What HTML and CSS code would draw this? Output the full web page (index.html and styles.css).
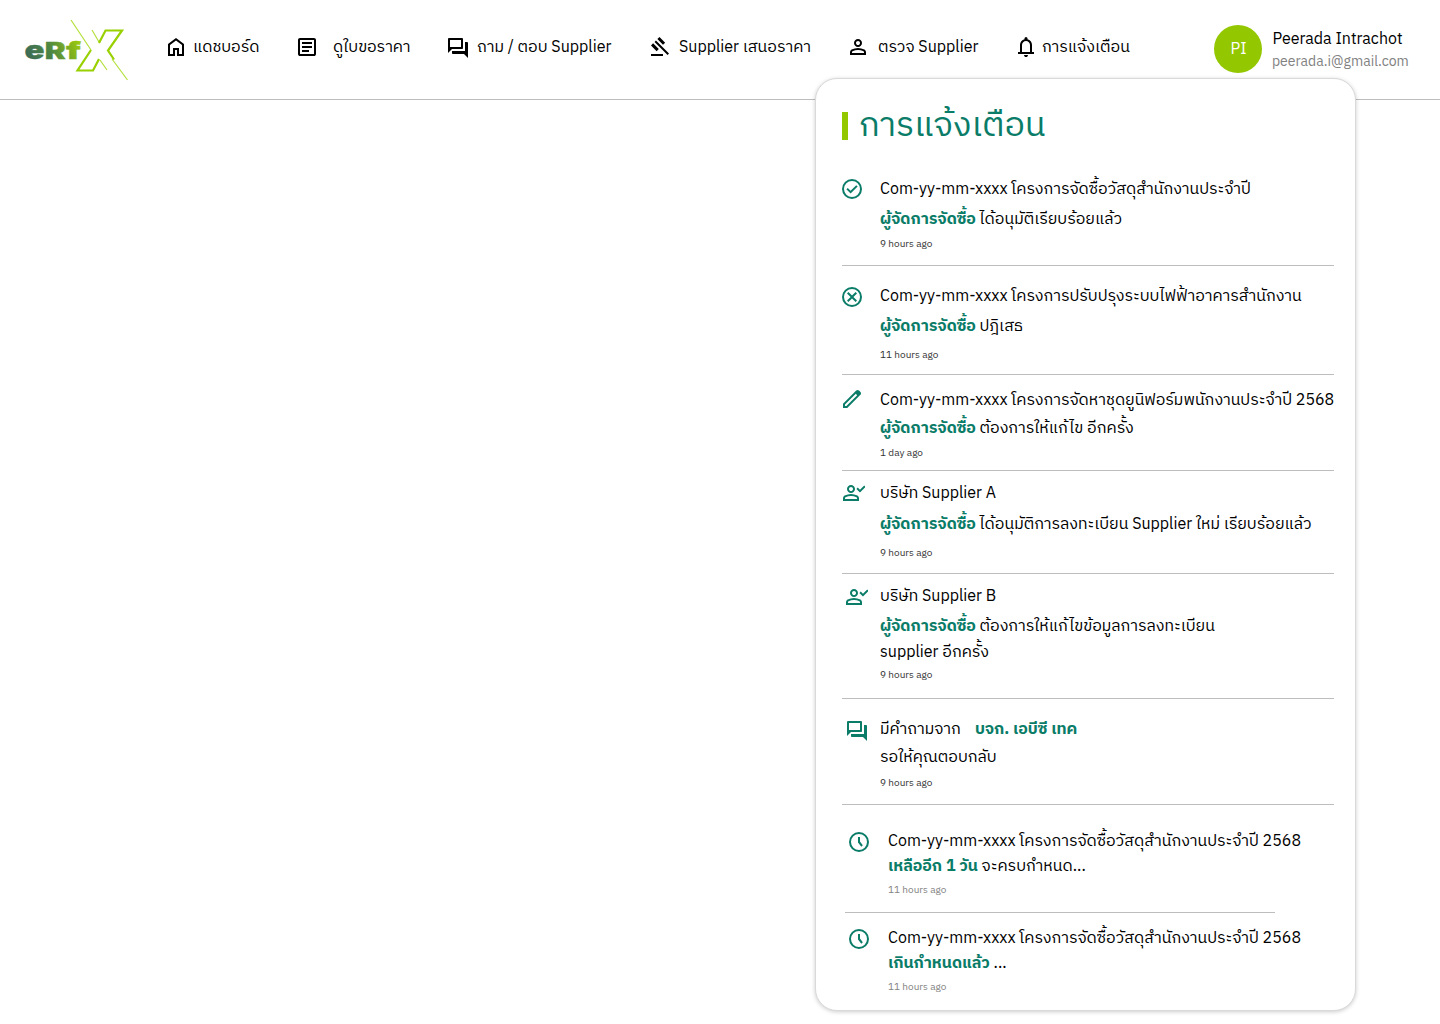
FILE: index.html
```html
<!DOCTYPE html>
<html lang="th">
<head>
<meta charset="utf-8">
<title>eRfX</title>
<link rel="stylesheet" href="styles.css">
</head>
<body>
<svg class="sprite" aria-hidden="true">
  <symbol id="home" viewBox="0 0 24 24"><path d="M6 19h3v-6h6v6h3v-9l-6-4.5L6 10v9Zm-2 2V9l8-6 8 6v12h-7v-6h-2v6H4Z"/></symbol>
  <symbol id="article" viewBox="0 0 24 24"><path d="M7 17h7v-2H7v2Zm0-4h10v-2H7v2Zm0-4h10V7H7v2ZM5 21q-.825 0-1.413-.588T3 19V5q0-.825.588-1.413T5 3h14q.825 0 1.413.588T21 5v14q0 .825-.588 1.413T19 21H5Zm0-2h14V5H5v14Z"/></symbol>
  <symbol id="forum" viewBox="0 0 24 24"><path d="M7 18q-.425 0-.713-.288T6 17v-2h13V6h2q.425 0 .713.288T22 7v15l-4-4H7Zm-5-1V3q0-.425.288-.713T3 2h13q.425 0 .713.288T17 3v9q0 .425-.288.713T16 13H6l-4 4Zm13-6V4H4v7h11Z"/></symbol>
  <symbol id="gavel" viewBox="0 0 24 24"><path d="M3 21v-2h12v2H3Zm5.65-4.85L3 10.5l2.1-2.15L10.8 14l-2.15 2.15ZM15 9.8 9.35 4.1l2.15-2.1 5.65 5.65L15 9.8ZM19.6 20 6.55 6.95l1.4-1.4L21 18.6 19.6 20Z"/></symbol>
  <symbol id="person" viewBox="0 0 24 24"><path d="M12 12q-1.65 0-2.825-1.175T8 8q0-1.65 1.175-2.825T12 4q1.65 0 2.825 1.175T16 8q0 1.65-1.175 2.825T12 12Zm-8 8v-2.8q0-.85.438-1.563T5.6 14.55q1.55-.775 3.15-1.163T12 13q1.65 0 3.25.388t3.15 1.162q.725.375 1.163 1.088T20 17.2V20H4Zm2-2h12v-.8q0-.275-.138-.5t-.362-.35q-1.35-.675-2.725-1.013T12 15q-1.4 0-2.775.337T6.5 16.35q-.225.125-.363.35T6 17.2v.8Zm6-8q.825 0 1.413-.588T14 8q0-.825-.588-1.413T12 6q-.825 0-1.413.588T10 8q0 .825.588 1.413T12 10Z"/></symbol>
  <symbol id="bell" viewBox="0 0 24 24"><path d="M4 19v-2h2v-7q0-2.075 1.25-3.688T10.500 4.200V3.500q0-.625.438-1.063T12 2q.625 0 1.063.438T13.500 3.500v.7q2 .5 3.250 2.113T18 10v7h2v2H4Zm8 3q-.825 0-1.413-.588T10 20h4q0 .825-.588 1.413T12 22Zm-4-5h8v-7q0-1.650-1.175-2.825T12 6q-1.650 0-2.825 1.175T8 10v7Z"/></symbol>
  <symbol id="check" viewBox="0 0 24 24"><circle cx="12" cy="12" r="9" fill="none" stroke="currentColor" stroke-width="2"/><path d="m10.600 16.600 7.050-7.050-1.400-1.400-5.650 5.650-2.850-2.850-1.400 1.400 4.250 4.250Z"/></symbol>
  <symbol id="cancel" viewBox="0 0 24 24"><circle cx="12" cy="12" r="9" fill="none" stroke="currentColor" stroke-width="2"/><path d="m8.400 17 3.600-3.600 3.600 3.600 1.400-1.400-3.600-3.600L17 8.400 15.600 7 12 10.600 8.400 7 7 8.400l3.600 3.600L7 15.600 8.400 17Z"/></symbol>
  <symbol id="edit" viewBox="0 0 24 24"><path d="M5 19h1.400L17.200 8.200l-1.400-1.400L5 17.600V19ZM3 21v-4.250L16.200 3.575q.3-.275.663-.425t.762-.15q.4 0 .775.150t.65.450l1.375 1.400q.3.275.438.650t.137.750q0 .4-.137.763t-.438.662L7.250 21H3Z"/></symbol>
  <symbol id="reg" viewBox="0 0 24 24"><path d="m17.550 12-3.550-3.550 1.400-1.400 2.150 2.100 4.250-4.250 1.400 1.450L17.550 12Z" transform="translate(1.400 -.5)"/><path d="M12 12q-1.650 0-2.825-1.175T8 8q0-1.650 1.175-2.825T12 4q1.650 0 2.825 1.175T16 8q0 1.650-1.175 2.825T12 12Zm-8 8v-2.800q0-.85.438-1.563T5.600 14.550q1.550-.775 3.150-1.163T12 13q1.650 0 3.250.388t3.150 1.162q.725.375 1.163 1.088T20 17.200V20H4Zm2-2h12v-.8q0-.275-.138-.5t-.362-.35q-1.350-.675-2.725-1.013T12 15q-1.400 0-2.775.337T6.500 16.350q-.225.125-.363.350T6 17.200v.8Zm6-8q.825 0 1.413-.588T14 8q0-.825-.588-1.413T12 6q-.825 0-1.413.588T10 8q0 .825.588 1.413T12 10Z" transform="translate(-2)"/></symbol>
  <symbol id="clock" viewBox="0 0 24 24"><circle cx="12" cy="12" r="9" fill="none" stroke="currentColor" stroke-width="2"/><path d="M11 7v5.400l3.300 4.300 1.500-1.400-2.800-3.700V7Z"/></symbol>
</svg>

<header class="topbar">
  <svg class="logo" viewBox="0 0 104 62" role="img" aria-label="eRfX">
    <defs>
      <linearGradient id="word" gradientUnits="userSpaceOnUse" x1="4" y1="42" x2="54" y2="20">
        <stop offset="0" stop-color="#3c6a57"/><stop offset=".45" stop-color="#4c8544"/><stop offset="1" stop-color="#9cca0c"/>
      </linearGradient>
    </defs>
    <g class="logo-word" fill="url(#word)" stroke="url(#word)">
      <text x=".5" y="39.200" font-size="25.500" textLength="20" lengthAdjust="spacingAndGlyphs">e</text>
      <text x="20.800" y="38.700" font-size="22.500" textLength="21" lengthAdjust="spacingAndGlyphs">R</text>
      <text x="42" y="38.700" font-size="24" textLength="15" lengthAdjust="spacingAndGlyphs">f</text>
    </g>
    <g class="logo-x">
      <path class="thin" d="M47 0 67 30M68 10l7 12M76 40l7 10M88 39l15.500 21"/>
      <path d="M67 30 53.500 50.500H69l6-11.500M75 23l6.500-12.500H98L84 30.500l6 9"/>
    </g>
  </svg>
  <nav class="nav">
    <a class="nav-item dash"><svg><use href="#home"/></svg><span>แดชบอร์ด</span></a>
    <a class="nav-item quote"><svg><use href="#article"/></svg><span>ดูใบขอราคา</span></a>
    <a class="nav-item ask"><svg><use href="#forum"/></svg><span>ถาม / ตอบ Supplier</span></a>
    <a class="nav-item offer"><svg><use href="#gavel"/></svg><span>Supplier เสนอราคา</span></a>
    <a class="nav-item verify"><svg><use href="#person"/></svg><span>ตรวจ Supplier</span></a>
    <a class="nav-item alerts"><svg><use href="#bell"/></svg><span>การแจ้งเตือน</span></a>
  </nav>
  <div class="profile">
    <div class="avatar">PI</div>
    <div class="who"><div class="name">Peerada Intrachot</div><div class="mail">peerada.i@gmail.com</div></div>
  </div>
</header>

<section class="panel">
  <h1 class="title"><span>การแจ้งเตือน</span></h1>
  <ul class="list">
    <li class="item n1"><svg><use href="#check"/></svg><div class="body">
      <p>Com-yy-mm-xxxx โครงการจัดซื้อวัสดุสำนักงานประจำปี</p>
      <p><b>ผู้จัดการจัดซื้อ</b> ได้อนุมัติเรียบร้อยแล้ว</p><time>9 hours ago</time></div></li>
    <li class="item n2"><svg><use href="#cancel"/></svg><div class="body">
      <p>Com-yy-mm-xxxx โครงการปรับปรุงระบบไฟฟ้าอาคารสำนักงาน</p>
      <p><b>ผู้จัดการจัดซื้อ</b> ปฎิเสธ</p><time>11 hours ago</time></div></li>
    <li class="item n3"><svg><use href="#edit"/></svg><div class="body">
      <p>Com-yy-mm-xxxx โครงการจัดหาชุดยูนิฟอร์มพนักงานประจำปี 2568</p>
      <p><b>ผู้จัดการจัดซื้อ</b> ต้องการให้แก้ไข อีกครั้ง</p><time>1 day ago</time></div></li>
    <li class="item n4"><svg><use href="#reg"/></svg><div class="body">
      <p>บริษัท Supplier A</p>
      <p><b>ผู้จัดการจัดซื้อ</b> ได้อนุมัติการลงทะเบียน Supplier ใหม่ เรียบร้อยแล้ว</p><time>9 hours ago</time></div></li>
    <li class="item n5"><svg><use href="#reg"/></svg><div class="body">
      <p>บริษัท Supplier B</p>
      <p><b>ผู้จัดการจัดซื้อ</b> ต้องการให้แก้ไขข้อมูลการลงทะเบียน</p>
      <p class="cont">supplier อีกครั้ง</p><time>9 hours ago</time></div></li>
    <li class="item n6"><svg><use href="#forum"/></svg><div class="body">
      <p>มีคำถามจาก <b class="company">บจก. เอบีซี เทค</b></p>
      <p>รอให้คุณตอบกลับ</p><time>9 hours ago</time></div></li>
    <li class="item n7"><svg><use href="#clock"/></svg><div class="body">
      <p>Com-yy-mm-xxxx โครงการจัดซื้อวัสดุสำนักงานประจำปี 2568</p>
      <p><b>เหลืออีก 1 วัน</b> จะครบกำหนด...</p><time>11 hours ago</time></div></li>
    <li class="item n8"><svg><use href="#clock"/></svg><div class="body">
      <p>Com-yy-mm-xxxx โครงการจัดซื้อวัสดุสำนักงานประจำปี 2568</p>
      <p><b>เกินกำหนดแล้ว</b> ...</p><time>11 hours ago</time></div></li>
  </ul>
</section>
</body>
</html>
```
FILE: styles.css
```css
* { box-sizing: border-box; margin: 0; padding: 0; }
body {
  position: relative;
  height: 1024px;
  overflow: hidden;
  background: #fff;
  color: #000;
  font: 16px/26px "IBM Plex Sans Thai", "IBM Plex Sans", "Noto Sans Thai", "Noto Sans", sans-serif;
}
.sprite { position: absolute; width: 0; height: 0; }
.topbar { display: flex; height: 100px; border-bottom: 1px solid #bdbdbd; }
.logo { width: 104px; height: 62px; margin: 20px 0 0 24px; overflow: visible; flex: none; }
.logo-word { font-family: Inter, sans-serif; font-weight: 900; stroke-width: .3; }
.logo-x { fill: none; stroke: #98d000; stroke-width: 2.200; }
.logo-x .thin { stroke: #b4e03c; stroke-width: 1.200; }

.nav { display: flex; margin-left: 36px; height: 24px; margin-top: 35px; white-space: nowrap; }
.nav-item { display: flex; flex: none; height: 24px; }
.nav-item svg { width: 24px; height: 24px; fill: currentColor; flex: none; }
.dash { width: 131px; gap: 5px; }
.quote { width: 151px; gap: 14px; }
.ask { width: 202px; gap: 7px; }
.ask svg { margin-top: 1px; }
.offer { width: 198px; gap: 7px; }
.verify { width: 168px; gap: 8px; }
.alerts { width: 130px; gap: 4px; }

.profile { display: flex; gap: 10px; margin: 25px 0 0 70px; white-space: nowrap; }
.avatar { width: 48px; height: 48px; padding-left: 1px; border-radius: 50%; background: #93c700; color: #fff; text-align: center; line-height: 50px; }
.name { height: 24px; margin-top: 2px; padding-left: .5px; }
.mail { height: 22px; font-size: 14px; line-height: 21px; color: #828282; }

/* The notification menu opens over the header's lower edge. */
.panel {
  position: absolute;
  left: 815px;
  top: 78px;
  width: 541px;
  height: 933px;
  padding: 0 21px 0 26px;
  border: 1px solid #d9d9d9;
  border-radius: 22px;
  background: #fff;
  box-shadow: 0 1px 4px rgba(0, 0, 0, .2);
}
.title { display: flex; align-items: center; gap: 11px; height: 77px; padding-top: 17px; font-size: 34px; font-weight: 400; line-height: 48px; color: #0a7c68; white-space: nowrap; }
.title::before { content: ""; width: 6px; height: 28px; background: #93c700; }
.list { list-style: none; }
.item { display: flex; border-bottom: 1px solid #bdbdbd; white-space: nowrap; }
.item svg { width: 24px; height: 24px; margin-left: -2px; flex: none; fill: currentColor; color: #0a7c68; }
.body { margin-left: 16px; }
.body p { height: 24px; }
.body b { color: #0a7c68; font-weight: 700; }
.body time { display: block; height: 14px; font-size: 10px; line-height: 14px; color: #333; }
.n1 { height: 110px; padding-top: 21px; }
.n1 p + p, .n1 time { margin-top: 6px; }
.n2 { height: 109px; padding-top: 18px; }
.n2 p + p { margin-top: 6px; }
.n2 svg { margin-top: 1px; }
.n2 time { margin-top: 10px; }
.n3 { height: 96px; padding-top: 13px; }
.n3 svg { margin-top: -1px; }
.n3 p + p { margin-top: 4px; }
.n3 time { margin-top: 6px; }
.n4 { height: 103px; padding-top: 10px; }
.n4 svg { margin-left: -1px; }
.n4 .body { margin-left: 15px; }
.n4 p + p { margin-top: 7px; }
.n4 time { margin-top: 10px; }
.n5 { height: 125px; padding-top: 10px; }
.n5 svg { margin-left: 2px; margin-top: 1px; }
.n5 .body { margin-left: 12px; }
.n5 p + p { margin-top: 6px; }
.n5 p + .cont { margin-top: 2px; }
.n5 time { margin-top: 4px; }
.n6 { height: 106px; padding-top: 18px; }
.n6 svg { margin: 2px 0 0 3px; }
.n6 .body { margin-left: 11px; }
.n6 .company { margin-left: 10.500px; }
.n6 p + p { margin-top: 4px; }
.n6 time { margin-top: 7px; }
.n7 { height: 108px; padding-top: 24px; width: 430px; margin-left: 3px; }
.n8 { height: 97px; padding-top: 13px; width: 430px; margin-left: 3px; border: 0; }
.n7 svg, .n8 svg { margin: 1px 0 0 2px; }
.n7 .body, .n8 .body { margin-left: 17px; }
.n7 p + p, .n8 p + p { margin-top: 1px; }
.n7 time, .n8 time { margin-top: 5px; color: #828282; }
```
